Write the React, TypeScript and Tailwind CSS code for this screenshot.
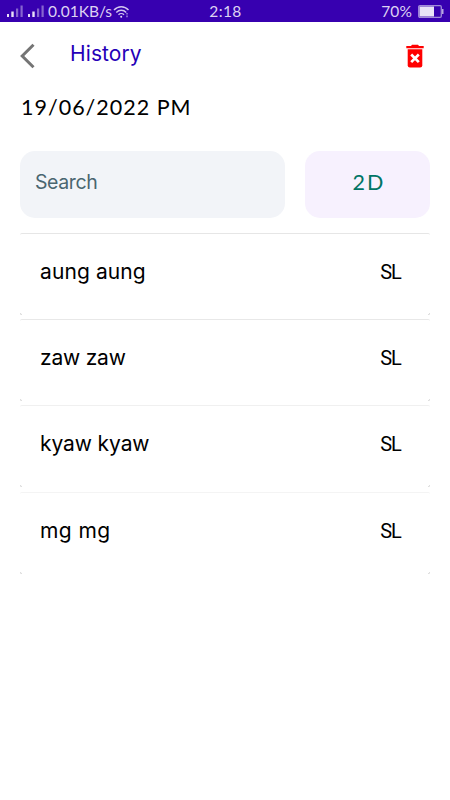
const records = [
  { name: 'aung aung', spacing: 'tracking-[0.1px]', line: 'border-[#e6e6e6]' },
  { name: 'zaw zaw', spacing: 'tracking-[-0.2px]', line: 'border-[#e8e8e8]' },
  { name: 'kyaw kyaw', spacing: 'tracking-[-0.1px]', line: 'border-[#f0f0f0]' },
  { name: 'mg mg', spacing: 'tracking-[0.4px]', line: 'border-[#f4f4f4]' },
];

function Signal() {
  return (
    <svg width="17" height="12" viewBox="0 0 17 12" fill="#e9e0f7">
      <rect x="0" y="9" width="2" height="3" />
      <rect x="4.3" y="6.5" width="2.4" height="5.5" />
      <rect x="9" y="3.5" width="2.2" height="8.5" opacity="0.45" />
      <rect x="13.5" y="0.5" width="2.2" height="11.5" opacity="0.45" />
    </svg>
  );
}

function StatusBar() {
  return (
    <header className="grid h-[22px] grid-cols-[1fr_auto_1fr] items-center bg-[#3700b0] font-['Lato',sans-serif] text-[15.5px] leading-none text-[#ddd2f3]">
      <div className="flex items-center pl-[7px]">
        <Signal />
        <span className="ml-[4px] flex">
          <Signal />
        </span>
        <span className="ml-[3px] mt-[2px] whitespace-nowrap">0.01KB/s</span>
        <svg className="ml-[1px] mt-[2px]" width="17" height="14" viewBox="0 0 17 14" fill="none" stroke="#d3c5ef" strokeWidth="1.4">
          <path d="M1 5C5 0.6 11.5 0.6 15.5 5" />
          <path d="M3.3 7.4C6 4.5 10.5 4.5 13.2 7.4" />
          <path d="M5.5 9.7C7 8.2 9.5 8.2 11 9.7" />
          <circle cx="8.2" cy="11.8" r="1" fill="#e9e0f7" stroke="none" />
          <path d="M14 8v4.5" strokeDasharray="1.6 1" opacity="0.7" />
        </svg>
      </div>
      <span className="mt-[2px] pl-[1px] tracking-[0.4px]">2:18</span>
      <div className="flex items-center justify-end pr-[6px]">
        <span className="mt-[2px] tracking-[0.1px]">70%</span>
        <svg className="ml-[6px]" width="26" height="13" viewBox="0 0 26 13">
          <rect x="0.7" y="0.7" width="22.6" height="11.6" rx="1.2" fill="none" stroke="#a28bd9" strokeWidth="1.3" />
          <rect x="1.5" y="1.5" width="14.5" height="10" fill="#e9e3f7" />
          <rect x="24" y="4" width="1.5" height="5" fill="#b8a6e2" />
        </svg>
      </div>
    </header>
  );
}

export default function App() {
  return (
    <div className="h-[800px] w-[450px] overflow-hidden bg-white font-['Inter',sans-serif] text-black">
      <StatusBar />

      <main className="px-5">
        <div className="flex h-[64px] items-start">
          <svg className="mt-[21px]" width="16" height="26" viewBox="0 0 16 26" fill="none" stroke="#757575" strokeWidth="3">
            <path d="M13.5 1.7L2.2 13L13.5 24.3" />
          </svg>
          <h1 className="ml-[34px] mt-[20px] text-[21px] leading-6 tracking-[0.1px] text-[#2500b8]">History</h1>
          <svg className="ml-auto mr-[6px] mt-[22px]" width="18" height="24" viewBox="0 0 18 24">
            <path d="M0.3 2.1H5L6 0.8H12L13 2.1H17.7V4.3H0.3Z" fill="#ff0000" />
            <path d="M1.7 5.3H16.3V21.2Q16.3 23.4 14.1 23.4H3.9Q1.7 23.4 1.7 21.2Z" fill="#ff0000" />
            <path d="M5.2 10.5L12.8 18.1M12.8 10.5L5.2 18.1" stroke="#fff" strokeWidth="2.7" />
          </svg>
        </div>

        <p className="mt-[8px] h-[27px] pl-[1px] font-['Lato',sans-serif] text-[21.5px] leading-[27px] tracking-[1px]">
          19/06/2022 PM
        </p>

        <div className="mt-[30px] flex h-[67px] gap-5">
          <input
            className="h-full w-[265px] rounded-[15px] bg-[#f2f4f8] px-[15px] pb-[6px] text-[19.5px] tracking-[-0.4px] outline-none placeholder:text-[#4a6670]"
            placeholder="Search"
          />
          <button className="flex h-full w-[125px] items-center justify-center rounded-[15px] bg-[#f7f1fe] pb-[5px] pl-[3px] font-['Lato',sans-serif] text-[21.5px] tracking-[2px] text-[#007565]">
            2D
          </button>
        </div>

        <ul className="mt-[15px]">
          {records.map((record) => (
            <li key={record.name} className="h-[86.2px]">
              <div className={`relative flex h-[82px] items-start justify-between rounded-[2px] border-t pl-5 pr-[29px] pt-[24px] ${record.line}`}>
                <span className={`text-[21px] leading-7 ${record.spacing}`}>{record.name}</span>
                <span className="font-['Roboto',sans-serif] text-[20px] leading-7 tracking-[-0.9px]">SL</span>
                {/* rounded card corners */}
                <i className="absolute bottom-0 left-0 size-[2px] rounded-bl-[2px] border-b border-l border-[#d8d8d8]" />
                <i className="absolute bottom-0 right-0 size-[2px] rounded-br-[2px] border-b border-r border-[#d8d8d8]" />
              </div>
            </li>
          ))}
        </ul>
      </main>
    </div>
  );
}
